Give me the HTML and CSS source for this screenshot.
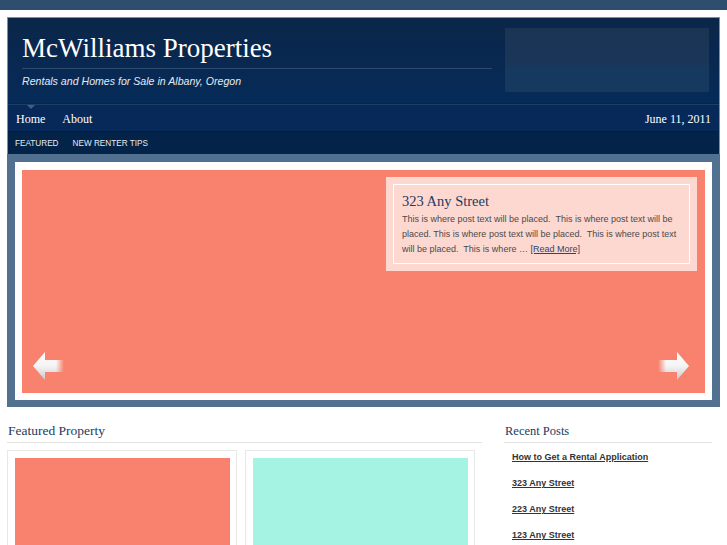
FILE: index.html
```html
<!DOCTYPE html>
<html>
<head>
<meta charset="utf-8">
<link rel="stylesheet" href="styles.css">
</head>
<body>
<div class="topbar"></div>
<div class="page">
  <div class="masthead">
    <header class="header">
      <div class="brand">
        <h1 class="site-title">McWilliams Properties</h1>
        <p class="tagline">Rentals and Homes for Sale in Albany, Oregon</p>
      </div>
      <div class="banner"></div>
    </header>
    <nav class="mainnav">
      <span class="caret"></span>
      <ul class="menu">
        <li>Home</li>
        <li>About</li>
      </ul>
      <span class="date">June 11, 2011</span>
    </nav>
    <nav class="subnav">
      <ul class="submenu">
        <li>Featured</li>
        <li>New Renter Tips</li>
      </ul>
    </nav>
  </div>
  <section class="slider">
    <div class="slider-frame">
      <div class="slide">
        <div class="caption">
          <div class="caption-inner">
            <h2 class="caption-title">323 Any Street</h2>
            <p class="caption-text">This is where post text will be placed.&nbsp; This is where post text will be placed. This is where post text will be placed.&nbsp; This is where post text will be placed.&nbsp; This is where … <a class="more" href="#">[Read More]</a></p>
          </div>
        </div>
        <div class="arrows">
          <svg class="arrow" width="32" height="30" viewBox="0 0 32 30">
            <defs>
              <linearGradient id="gl" x1="0" y1="0" x2="0" y2="1">
                <stop offset="0" stop-color="#ffffff"/>
                <stop offset="0.5" stop-color="#f4f4f4"/>
                <stop offset="1" stop-color="#c9c9c9"/>
              </linearGradient>
              <linearGradient id="fl" x1="0" y1="0" x2="1" y2="0">
                <stop offset="0" stop-color="#fff" stop-opacity="1"/>
                <stop offset="0.75" stop-color="#fff" stop-opacity="1"/>
                <stop offset="1" stop-color="#fff" stop-opacity="0"/>
              </linearGradient>
              <mask id="ml"><rect x="0" y="0" width="32" height="30" fill="url(#fl)"/></mask>
            </defs>
            <path d="M1 15 L13 1 L13 9 L32 9 L32 21 L13 21 L13 29 Z" fill="url(#gl)" mask="url(#ml)"/>
          </svg>
          <svg class="arrow" width="32" height="30" viewBox="0 0 32 30">
            <defs>
              <linearGradient id="gr" x1="0" y1="0" x2="0" y2="1">
                <stop offset="0" stop-color="#ffffff"/>
                <stop offset="0.5" stop-color="#f4f4f4"/>
                <stop offset="1" stop-color="#c9c9c9"/>
              </linearGradient>
              <linearGradient id="fr" x1="1" y1="0" x2="0" y2="0">
                <stop offset="0" stop-color="#fff" stop-opacity="1"/>
                <stop offset="0.75" stop-color="#fff" stop-opacity="1"/>
                <stop offset="1" stop-color="#fff" stop-opacity="0"/>
              </linearGradient>
              <mask id="mr"><rect x="0" y="0" width="32" height="30" fill="url(#fr)"/></mask>
            </defs>
            <path d="M31 15 L19 1 L19 9 L0 9 L0 21 L19 21 L19 29 Z" fill="url(#gr)" mask="url(#mr)"/>
          </svg>
        </div>
      </div>
    </div>
  </section>
  <div class="content">
    <main class="main">
      <h3 class="section-title">Featured Property</h3>
      <div class="cards">
        <div class="card"><div class="thumb salmon"></div></div>
        <div class="card"><div class="thumb aqua"></div></div>
      </div>
    </main>
    <aside class="sidebar">
      <h3 class="section-title">Recent Posts</h3>
      <ul class="posts">
        <li><a href="#">How to Get a Rental Application</a></li>
        <li><a href="#">323 Any Street</a></li>
        <li><a href="#">223 Any Street</a></li>
        <li><a href="#">123 Any Street</a></li>
      </ul>
    </aside>
  </div>
</div>
</body>
</html>
```
FILE: styles.css
```css
* { box-sizing: border-box; }
html, body { margin: 0; padding: 0; background: #ffffff; }
body { font-family: "Liberation Sans", Arial, sans-serif; height: 545px; overflow: hidden; }
ul { list-style: none; margin: 0; padding: 0; }

.topbar { height: 10px; background: #2f4d6d; }

.page { margin: 7px 7px 0 7px; }

.masthead {
  border: 1px solid #7d8fa6;
  border-bottom: none;
  background: #062a55;
}

.header {
  height: 86px;
  display: flex;
  justify-content: space-between;
  background: linear-gradient(#0b2649, #062b58);
  border-bottom: 1px solid #0a2546;
}
.brand { width: 470px; margin-left: 14px; padding-top: 13px; }
.site-title {
  margin: 0;
  font-family: "Liberation Serif", "Times New Roman", serif;
  font-weight: normal;
  font-size: 27px;
  line-height: 34px;
  color: #ffffff;
  padding-bottom: 3px;
  border-bottom: 1px solid #2c4a70;
}
.tagline {
  margin: 5px 0 0 0;
  font-style: italic;
  font-size: 10.6px;
  line-height: 14px;
  color: #e4eaf1;
}
.banner {
  width: 204px;
  height: 64px;
  margin: 10px 10px 0 0;
  background: linear-gradient(#1a3454 0%, #1a3658 58%, #15395f 59%, #15395f 100%);
}

.mainnav {
  position: relative;
  height: 27px;
  display: flex;
  align-items: center;
  justify-content: space-between;
  padding: 2px 8px 0 8px;
  border-top: 1px solid #1d3f66;
  background: #06295a;
  font-family: "Liberation Serif", "Times New Roman", serif;
  font-size: 12px;
  color: #ffffff;
}
.caret {
  position: absolute;
  left: 19px;
  top: 0;
  width: 0; height: 0;
  border-left: 4px solid transparent;
  border-right: 4px solid transparent;
  border-top: 4px solid #3f5f85;
}
.menu { display: flex; gap: 17px; }
.date { font-size: 12px; }

.subnav {
  height: 23px;
  display: flex;
  align-items: center;
  padding: 1px 0 0 7px;
  background: #032349;
  border-top: 1px solid #031d3d;
}
.submenu { display: flex; gap: 14px; }
.submenu li {
  font-size: 8.2px;
  text-transform: uppercase;
  color: #e6ecf3;
}

.slider {
  background: #52708f;
  padding: 8px 8px 7px 8px;
}
.slider-frame { background: #ffffff; padding: 8px 7px 7px 7px; }
.slide {
  height: 223px;
  background: #f8826d;
  display: flex;
  flex-direction: column;
  align-items: flex-end;
  padding: 7px 8px 0 0;
}
.caption {
  width: 311px;
  height: 94px;
  background: #fdd8d0;
  padding: 7px;
}
.caption-inner {
  height: 100%;
  border: 1px solid #ffffff;
  padding: 8px 0 0 8px;
}
.caption-title {
  margin: 0;
  font-family: "Liberation Serif", "Times New Roman", serif;
  font-weight: normal;
  font-size: 14.5px;
  line-height: 16px;
  color: #1d3a60;
}
.caption-text {
  margin: 3px 0 0 0;
  font-size: 9px;
  line-height: 15px;
  color: #4a4a4a;
}
.more { color: #2c4670; }

.arrows {
  align-self: stretch;
  display: flex;
  justify-content: space-between;
  padding: 0 7px 0 10px;
  margin-top: 80px;
}

.content {
  display: flex;
  justify-content: space-between;
  padding-top: 15px;
}
.main { width: 475px; }
.sidebar { width: 208px; margin-right: 8px; }
.section-title {
  margin: 0;
  font-family: "Liberation Serif", "Times New Roman", serif;
  font-weight: normal;
  font-size: 13.5px;
  line-height: 17px;
  color: #1d3a60;
  padding: 0 0 3px 1px;
  border-bottom: 1px solid #e2e2e2;
}
.sidebar .section-title { font-size: 12.5px; padding-top: 1px; padding-bottom: 2px; }
.cards { display: flex; gap: 8px; margin-top: 7px; }
.card {
  width: 230px;
  height: 120px;
  border: 1px solid #e8e8e8;
  padding: 7px 6px 0 7px;
}
.thumb { height: 120px; }
.salmon { background: #f8826d; }
.aqua { background: #a5f4e3; }

.posts { padding-left: 8px; margin-top: 5px; }
.posts li { height: 26px; line-height: 14px; }
.posts a {
  font-size: 9px;
  font-weight: bold;
  color: #333333;
  text-decoration: underline;
}
```
